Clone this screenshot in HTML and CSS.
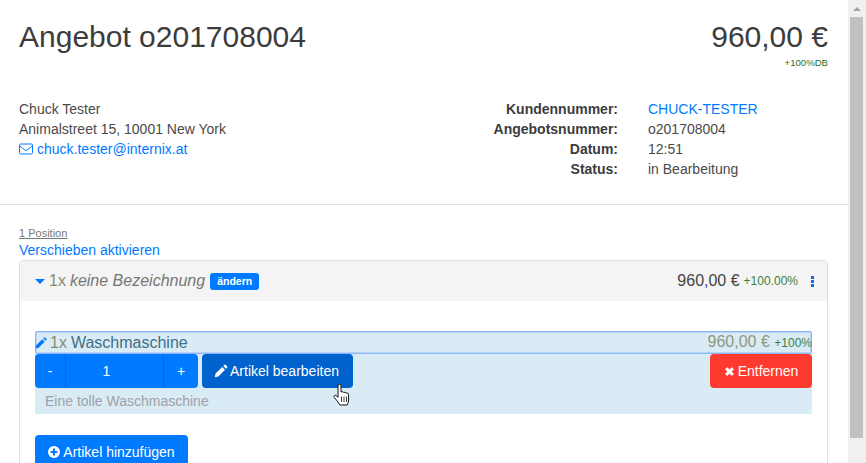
FILE: index.html
```html
<!DOCTYPE html>
<html lang="de">
<head>
<meta charset="utf-8">
<title>Angebot o201708004</title>
<link rel="stylesheet" href="styles.css">
</head>
<body>
<div class="page">
  <main class="main">
    <header class="head">
      <div class="title-row">
        <h1 class="title">Angebot o201708004</h1>
        <div class="total">
          <div class="total-value">960,00 €</div>
          <div class="total-db">+100%DB</div>
        </div>
      </div>
      <div class="info-row">
        <div class="address">
          <div>Chuck Tester</div>
          <div>Animalstreet 15, 10001 New York</div>
          <div class="mail">
            <svg class="mail-icon" viewBox="0 0 14 12" width="14" height="12"><rect x="0.5" y="1" width="13" height="10" rx="1.2" fill="none" stroke="#007bff"/><path d="M0.8 3l5 4q1.2 .9 2.4 0l5-4" fill="none" stroke="#007bff"/></svg>
            <a class="link" href="#">chuck.tester@internix.at</a>
          </div>
        </div>
        <dl class="meta">
          <dt>Kundennummer:</dt><dd><a class="link" href="#">CHUCK-TESTER</a></dd>
          <dt>Angebotsnummer:</dt><dd>o201708004</dd>
          <dt>Datum:</dt><dd>12:51</dd>
          <dt>Status:</dt><dd>in Bearbeitung</dd>
        </dl>
      </div>
    </header>
    <section class="positions">
      <div class="count">1 Position</div>
      <a class="link move" href="#">Verschieben aktivieren</a>
      <div class="card">
        <div class="card-head">
          <div class="card-title">
            <span class="caret"></span>
            <span class="qty">1x</span>
            <em class="name">keine Bezeichnung</em>
            <span class="badge">ändern</span>
          </div>
          <div class="card-sum">
            <span class="sum">960,00 €</span>
            <span class="pct">+100.00%</span>
            <span class="dots"><i></i><i></i><i></i></span>
          </div>
        </div>
        <div class="card-body">
          <div class="item">
            <div class="item-line">
              <div class="item-name">
                <svg class="item-pencil" viewBox="0 0 12 12" width="12" height="12"><path d="M0.500 11.500l.7-3.200L7.200 2.300l2.500 2.500-6 6zM8.200 1.300l.9-.8q.5-.4 1 0l1.400 1.400q.4.5 0 1l-.8.9z" fill="#007bff"/></svg>
                <span class="qty">1x</span><span>Waschmaschine</span>
              </div>
              <div class="item-price"><span class="qty">960,00 €</span> <span class="item-pct">+100%</span></div>
            </div>
            <div class="item-actions">
              <div class="left-actions">
                <div class="stepper">
                  <button class="step" type="button">-</button>
                  <div class="step-value">1</div>
                  <button class="step step-plus" type="button">+</button>
                </div>
                <button class="btn btn-active" type="button">
                  <svg viewBox="0 0 14 14" width="14" height="14"><path d="M0.800 13.200l.8-3.600L8.200 3l2.800 2.800-6.600 6.600zM9.300 1.900l1.100-1.100q.6-.5 1.200 0l1.600 1.600q.5.6 0 1.200l-1.100 1.100z" fill="#fff"/></svg>
                  <span>Artikel bearbeiten</span>
                </button>
              </div>
              <button class="btn btn-danger" type="button">
                <svg viewBox="0 0 12 12" width="11" height="11"><path d="M1.500 3.500l2-2L6 4l2.500-2.500 2 2L8 6l2.500 2.500-2 2L6 8l-2.500 2.500-2-2L4 6z" fill="#fff" stroke="#fff" stroke-width=".6"/></svg>
                <span>Entfernen</span>
              </button>
            </div>
            <div class="item-desc">Eine tolle Waschmaschine</div>
          </div>
          <button class="btn btn-primary add" type="button">
            <svg viewBox="0 0 12 12" width="12" height="12"><circle cx="6" cy="6" r="6" fill="#fff"/><path d="M2.600 6h6.800M6 2.600v6.800" stroke="#007bff" stroke-width="2"/></svg>
            <span>Artikel hinzufügen</span>
          </button>
        </div>
      </div>
    </section>
  </main>
  <div class="scrollbar">
    <div class="arrow"></div>
    <div class="thumb"></div>
  </div>
  <svg class="cursor" viewBox="0 0 18 25" width="18" height="25"><path d="M5 2q1.500-1.600 3 0v7l1.200-.3q1-.1 1.300.7l1.400-.1q.9 0 1.100.8l1.300 0q1.300.2 1.300 1.400v5.500q0 2.600-1.500 5H7q-1-.9-2-3L1.300 14.500q-.8-1.600.5-2.100 1.100-.4 2.100.8l1.100 1.200z" fill="#fff" stroke="#111" stroke-width="1"/><path d="M8.500 13.500v5.500M11 13.500v5.500M13.500 13.500v5.500" stroke="#111" stroke-width=".8"/></svg>
</div>
</body>
</html>
```
FILE: styles.css
```css
* { box-sizing: border-box; }
html, body { margin: 0; padding: 0; height: 100%; overflow: hidden; }
body { font-family: "Liberation Sans", Arial, sans-serif; font-size: 14px; line-height: 20px; color: #4a4a4a; background: #fff; }
.page { position: relative; display: flex; width: 866px; height: 463px; overflow: hidden; }
.main { width: 848px; flex: none; height: 463px; overflow: hidden; }
.head { height: 205px; padding: 19px 20px 0 19px; border-bottom: 1px solid #dee2e6; }
.title-row { display: flex; justify-content: space-between; height: 80px; }
.title { margin: 0; font-size: 30px; font-weight: 400; line-height: 36px; color: #3c3c3c; }
.total { text-align: right; }
.total-value { font-size: 30px; line-height: 36px; color: #3c3c3c; }
.total-db { font-size: 9.600px; line-height: 14px; margin-top: 1px; color: #28702f; }
.info-row { display: flex; justify-content: space-between; }
.mail { display: flex; align-items: center; gap: 4px; }
.link { color: #007bff; text-decoration: none; }
.meta { display: grid; grid-template-columns: 170px 180px; column-gap: 30px; margin: 0; width: 380px; }
.meta dt { text-align: right; font-weight: 700; color: #3c3c3c; }
.meta dd { margin: 0; }
.positions { padding: 21px 20px 0 19px; }
.count { font-size: 11px; line-height: 14px; color: #777; text-decoration: underline; }
.move { display: block; line-height: 20px; }
.card { height: 300px; border: 1px solid #dfdfdf; border-radius: 4px; }
.card-head { display: flex; justify-content: space-between; align-items: center; height: 40px; padding: 0 13px 0 15px; background: #f4f4f4; }
.card-title { display: flex; align-items: center; gap: 4px; font-size: 16px; color: #777; }
.caret { width: 0; height: 0; border-left: 5px solid transparent; border-right: 5px solid transparent; border-top: 5px solid #007bff; }
.qty { color: #8a8a70; }
.name { font-style: italic; }
.badge { margin-left: 1px; background: #007bff; color: #fff; font-size: 10.500px; font-weight: 700; line-height: 17px; height: 17px; padding: 0 7px; border-radius: 3px; }
.card-sum { display: flex; align-items: center; gap: 4px; }
.sum { font-size: 16px; color: #444; }
.pct { font-size: 12px; color: #3f7f3f; }
.dots { display: inline-flex; flex-direction: column; gap: 1px; margin-left: 9px; }
.dots i { width: 3px; height: 3px; background: #0d6fe8; }
.card-body { padding: 30px 15px 0; }
.item { background: #d9ecf5; }
.item-line { display: flex; justify-content: space-between; align-items: center; height: 23px; border: 1px solid #8db6f8; border-radius: 2px; box-shadow: inset 0 0 0 1px #b7d3f5; font-size: 16px; color: #3f6f86; }
.item-name { display: flex; align-items: center; gap: 4px; }
.item-pencil { margin-left: -1px; margin-right: -1px; }
.item-price { margin-right: -1px; }
.item-price .qty { color: #8f9680; }
.item-pct { font-size: 12px; color: #3f7f3f; }
.item-actions { display: flex; justify-content: space-between; }
.left-actions { display: flex; gap: 4px; }
.stepper { display: flex; width: 163px; height: 34px; background: #007bff; border-radius: 4px; color: #fff; overflow: hidden; }
.step { width: 30px; border: 0; background: transparent; color: #fff; font: 14px "Liberation Sans", Arial, sans-serif; padding: 0; }
.step-plus { width: 34px; }
.step-value { flex: 1; text-align: center; line-height: 34px; padding-right: 16px; border-left: 1px solid #0069d9; border-right: 1px solid #0069d9; }
.btn { display: inline-flex; align-items: center; justify-content: center; gap: 3px; height: 34px; border: 0; border-radius: 4px; color: #fff; font: 14px "Liberation Sans", Arial, sans-serif; padding: 0 10px; white-space: nowrap; }
.btn-active { width: 151px; background: #0062cc; justify-content: flex-start; gap: 2px; padding: 0 0 0 12px; }
.btn-danger { width: 102px; background: #ff3b30; }
.btn-primary { background: #007bff; }
.item-desc { height: 26px; line-height: 26px; padding-left: 10px; color: #a0a0a8; }
.add { margin-top: 21px; width: 153px; }
.scrollbar { width: 18px; height: 463px; background: #f0f0f0; padding: 0 2px; }
.arrow { height: 17px; position: relative; }
.arrow::after { content: ""; position: absolute; left: 3px; top: 7px; border-left: 4px solid transparent; border-right: 4px solid transparent; border-bottom: 4px solid #a3a3a3; }
.thumb { width: 13px; height: 421px; background: #c1c1c1; }
.cursor { position: absolute; left: 333px; top: 383px; }
```
